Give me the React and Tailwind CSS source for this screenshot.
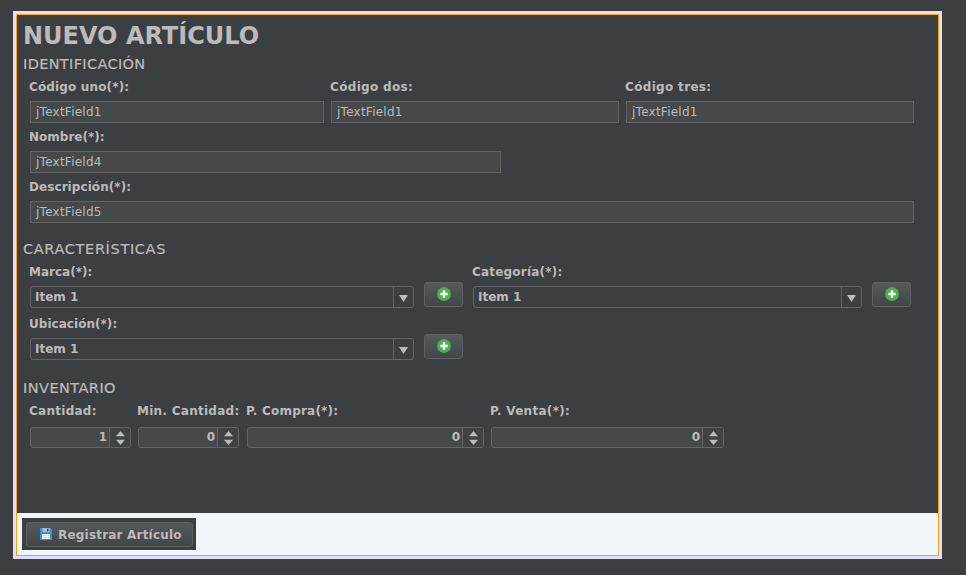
function Section({ children, className = '' }) {
  return <h2 className={`h-[20px] pl-[6px] text-[14.5px] leading-[20px] whitespace-nowrap [-webkit-text-stroke:0.2px_#bbbbbb] ${className}`}>{children}</h2>;
}

function Label({ children, className = '' }) {
  return <div className={`-ml-px h-[20px] pt-px text-[12px] leading-[20px] font-bold whitespace-nowrap ${className}`}>{children}</div>;
}

function TextField({ label, value, className = '', tracking = '' }) {
  return (
    <div className={className}>
      <Label className={tracking}>{label}</Label>
      <div className="mt-[5px] h-[22px] border border-[#646464] bg-[#45494a] pl-[5px] text-[12px] leading-[20px] tracking-[0.25px] whitespace-nowrap">
        {value}
      </div>
    </div>
  );
}

function Combo({ label, className = '', tracking = '' }) {
  return (
    <div className={className}>
      <Label className={tracking}>{label}</Label>
      <div className="mt-[5px] flex h-[22px] rounded-[3px] border border-[#646464] text-[12px] leading-[20px] font-bold">
        <span className="flex-1 pl-[4px]">Item 1</span>
        <span className="flex w-[20px] justify-center border-l border-[#646464] pt-[8px]">
          <svg width="9" height="7" viewBox="0 0 9 7"><path d="M0 0h9L4.5 7z" fill="#bbbbbb" /></svg>
        </span>
      </div>
    </div>
  );
}

function AddButton() {
  return (
    <button className="mt-[21px] ml-[10px] flex h-[25px] w-[39px] items-center justify-center rounded-[3px] border border-[#5e6162] bg-linear-to-b from-[#555a5c] to-[#414648]">
      <svg width="14" height="14" viewBox="0 0 14 14" className="-mt-px ml-px">
        <circle cx="7" cy="7" r="6.9" fill="#4caf50" />
        <path d="M5.8 3.3h2.4v2.5h2.5v2.4H8.2v2.5H5.8V8.2H3.3V5.8h2.5z" fill="#fff" />
      </svg>
    </button>
  );
}

function Spinner({ label, value, className = '', tracking = '' }) {
  return (
    <div className={className}>
      <Label className={tracking}>{label}</Label>
      <div className="mt-[7px] flex h-[21px] rounded-[3px] border border-[#646464] bg-[#45494a] text-[12px] leading-[18px] font-bold">
        <span className="flex-1 pr-[2px] text-right">{value}</span>
        <span className="w-[21px] rounded-r-[2px] border-l border-[#646464] bg-[#3f4345] pt-[3px] pl-[6px]">
          <svg width="9" height="14" viewBox="0 0 9 14"><path d="M0 5.3h9L4.5 0zM0 8.8h9L4.5 14z" fill="#bbbbbb" /></svg>
        </span>
      </div>
    </div>
  );
}

export default function App() {
  return (
    <div className="h-[575px] w-[966px] overflow-hidden bg-[#3c3f41] pt-[11px] pl-[13px] font-['DejaVu_Sans','Liberation_Sans',sans-serif] text-[#bbbbbb]">
      <div className="h-[548px] w-[929px] border-[3px] border-[#dedeff]">
        <div className="flex h-full flex-col border border-[#ffa500]">
          <main className="h-[498px] shrink-0">
            <h1 className="h-[39px] pl-[6px] text-[24px] leading-[42px] font-bold whitespace-nowrap">NUEVO ARTÍCULO</h1>
            <Section className="tracking-[0.35px]">IDENTIFICACIÓN</Section>
            <div className="mt-[2px] flex gap-[7px] pl-[13px]">
              <TextField label="Código uno(*):" value="jTextField1" className="w-[294px]" tracking="tracking-[0.15px]" />
              <TextField label="Código dos:" value="jTextField1" className="w-[288px]" tracking="tracking-[0.33px]" />
              <TextField label="Código tres:" value="jTextField1" className="w-[288px]" tracking="tracking-[0.33px]" />
            </div>
            <div className="mt-[3px] pl-[13px]">
              <TextField label="Nombre(*):" value="jTextField4" className="w-[471px]" />
            </div>
            <div className="mt-[3px] pl-[13px]">
              <TextField label="Descripción(*):" value="jTextField5" className="w-[884px]" tracking="tracking-[0.07px]" />
            </div>
            <Section className="mt-[16px] tracking-[0.65px]">CARACTERÍSTICAS</Section>
            <div className="mt-[2px] flex pl-[13px]">
              <Combo label="Marca(*):" className="w-[384px]" />
              <AddButton />
              <Combo label="Categoría(*):" className="ml-[10px] w-[389px]" tracking="tracking-[0.2px]" />
              <AddButton />
            </div>
            <div className="mt-[5px] flex pl-[13px]">
              <Combo label="Ubicación(*):" className="w-[384px]" tracking="tracking-[0.04px]" />
              <AddButton />
            </div>
            <Section className="mt-[18px] tracking-[0.45px]">INVENTARIO</Section>
            <div className="mt-[2px] flex pl-[13px]">
              <Spinner label="Cantidad:" value="1" className="w-[101px]" tracking="tracking-[0.27px]" />
              <Spinner label="Min. Cantidad:" value="0" className="ml-[7px] w-[101px]" tracking="tracking-[0.27px]" />
              <Spinner label="P. Compra(*):" value="0" className="ml-[8px] w-[237px]" tracking="tracking-[0.21px]" />
              <Spinner label="P. Venta(*):" value="0" className="ml-[7px] w-[233px]" tracking="tracking-[0.3px]" />
            </div>
          </main>
          <footer className="flex-1 bg-[#f0f6fa] pt-[5px] pl-[5px]">
            <div className="h-[32px] w-[174px] bg-[#3c3f41] pt-[4px] pl-[4px]">
              <button className="flex h-[25px] w-[167px] items-center rounded-[3px] border border-[#5e6162] bg-linear-to-b from-[#555a5c] to-[#414648] pl-[13px] text-[12px] font-bold tracking-[0.2px] whitespace-nowrap">
                <svg width="12" height="12" viewBox="0 0 12 12" className="-mt-px mr-[6px] shrink-0">
                  <path d="M0 0h10.5L12 1.5V12H0z" fill="#3594dc" />
                  <path d="M2.5 0H9.5V4H2.5z" fill="#b0bec5" />
                  <path d="M7 .8h1.4v2.5H7z" fill="#37474f" />
                  <path d="M2 6h8v5H2z" fill="#fff" />
                  <path d="M3 7.2h6v.8H3zM3 9h6v.8H3z" fill="#d5dade" />
                </svg>
                <span>Registrar Artículo</span>
              </button>
            </div>
          </footer>
        </div>
      </div>
    </div>
  );
}
